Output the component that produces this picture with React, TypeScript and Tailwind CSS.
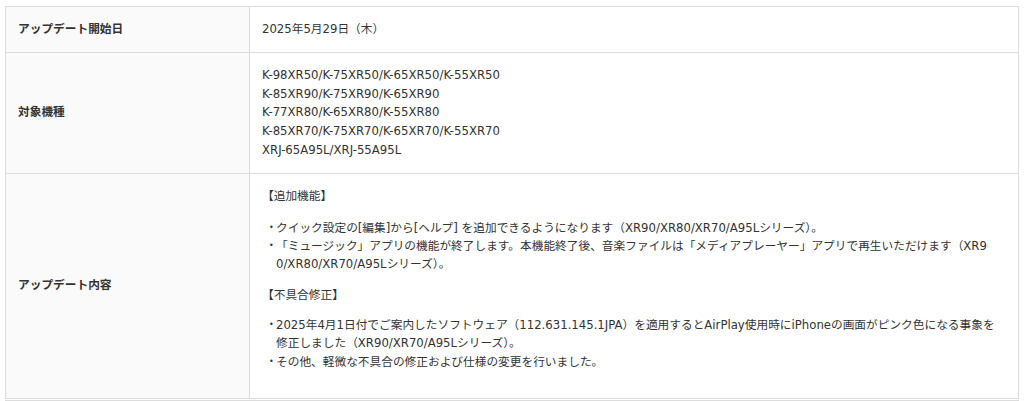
const font = "font-['DejaVu_Sans','Noto_Sans_CJK_JP',sans-serif]";

const models = [
  "K-98XR50/K-75XR50/K-65XR50/K-55XR50",
  "K-85XR90/K-75XR90/K-65XR90",
  "K-77XR80/K-65XR80/K-55XR80",
  "K-85XR70/K-75XR70/K-65XR70/K-55XR70",
  "XRJ-65A95L/XRJ-55A95L",
];

const added = [
  "クイック設定の[編集]から[ヘルプ] を追加できるようになります（XR90/XR80/XR70/A95Lシリーズ）。",
  "「ミュージック」アプリの機能が終了します。本機能終了後、音楽ファイルは「メディアプレーヤー」アプリで再生いただけます（XR90/XR80/XR70/A95Lシリーズ）。",
];

const fixes = [
  "2025年4月1日付でご案内したソフトウェア（112.631.145.1JPA）を適用するとAirPlay使用時にiPhoneの画面がピンク色になる事象を修正しました（XR90/XR70/A95Lシリーズ）。",
  "その他、軽微な不具合の修正および仕様の変更を行いました。",
];

function Bullets({ items, className }: { items: string[]; className: string }) {
  return (
    <ul className={className}>
      {items.map((item) => (
        <li key={item} className="flex leading-[18.2px]">
          <span className="w-[14px] shrink-0 pl-[7px] text-[8px]">•</span>
          <span className="min-w-0 break-all">{item}</span>
        </li>
      ))}
    </ul>
  );
}

export default function App() {
  const th =
    "w-[244px] border border-[#dcdcdc] bg-[#fafafa] px-[12px] text-left align-middle font-bold";
  const td = "border border-[#dcdcdc] bg-white pl-[12px] pr-[22px] align-top font-normal";

  return (
    <div className={`min-h-[401px] bg-white pt-[6px] pl-[5px] text-[11.7px] text-[#333] ${font}`}>
      <table className="w-[1014px] table-fixed border-collapse">
        <tbody>
          <tr>
            <th className={`${th} h-[46px] leading-[19px]`}>アップデート開始日</th>
            <td className={`${td} py-[13px] leading-[19px]`}>2025年5月29日（木）</td>
          </tr>
          <tr>
            <th className={`${th} leading-[19px]`}>対象機種</th>
            <td className={`${td} py-[13px] leading-[18.7px]`}>
              {models.map((m) => (
                <div key={m}>{m}</div>
              ))}
            </td>
          </tr>
          <tr>
            <th className={`${th} leading-[19px]`}>アップデート内容</th>
            <td className={`${td} pt-[13px] pb-[13px]`}>
              <p className="leading-[19px]">【追加機能】</p>
              <Bullets items={added} className="mt-[13px]" />
              <p className="mt-[13px] leading-[19px]">【不具合修正】</p>
              <Bullets items={fixes} className="mt-[11px] mb-[14px]" />
            </td>
          </tr>
        </tbody>
      </table>
      <div className="mt-[1px] grid h-[4px] w-[1014px] grid-cols-[243px_183px_182px_1fr] border-t border-l border-[#dcdcdc]">
        <div className="border-r border-[#dcdcdc] bg-[#fafafa]" />
        <div className="border-r border-[#dcdcdc]" />
        <div className="border-r border-[#dcdcdc]" />
        <div className="border-r border-[#dcdcdc]" />
      </div>
    </div>
  );
}
